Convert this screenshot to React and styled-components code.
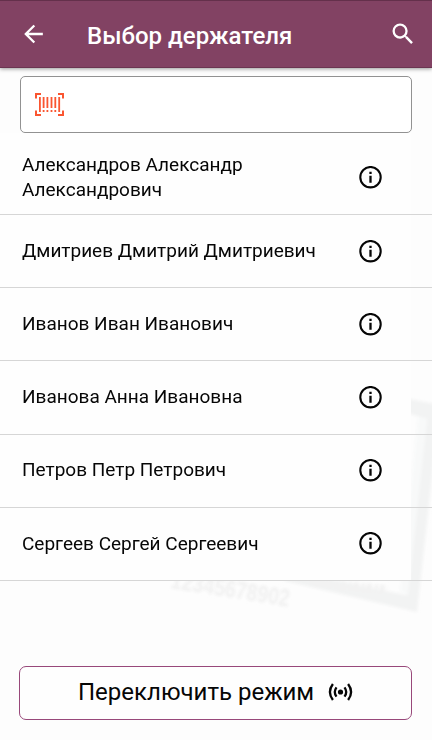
import React from "react";
import styled, { createGlobalStyle } from "styled-components";

const GlobalStyle = createGlobalStyle`
  * { box-sizing: border-box; }
  body { margin: 0; background: #fdfdfd; }
`;

const Screen = styled.div`
  position: relative;
  display: flex;
  flex-direction: column;
  width: 432px;
  height: 740px;
  overflow: hidden;
  background: #fdfdfd;
  color: #060606;
  font-family: Roboto, "Liberation Sans", sans-serif;
`;

const Watermark = styled.svg`
  position: absolute;
  left: 0;
  top: 0;
  pointer-events: none;
`;

const AppBar = styled.header`
  position: relative;
  display: flex;
  flex: none;
  align-items: center;
  height: 68px;
  padding: 0 15px 0 19px;
  color: #fff;
  background: #824263;
  border-top: 1px solid #64304b;
  border-bottom: 1px solid #6b3551;
  box-shadow: 0 1px 4px rgba(0, 0, 0, 0.4);
`;

const Title = styled.h1`
  flex: 1;
  margin: 3px 0 0 39px;
  font-size: 24px;
  line-height: 28px;
  font-weight: 500;
  white-space: nowrap;
`;

const IconButton = styled.button`
  display: flex;
  padding: 0;
  border: 0;
  background: none;
  color: inherit;
  svg { display: block; }
`;

const ScanField = styled.div`
  position: relative;
  display: flex;
  flex: none;
  align-items: center;
  height: 57px;
  margin: 8px 20px 0;
  padding-left: 14px;
  background: #fff;
  border: 1px solid #929292;
  border-radius: 5px;
`;

const List = styled.ul`
  position: relative;
  flex: none;
  display: grid;
  grid-template-rows: 82px repeat(5, 73.2px);
  margin: 0;
  padding: 0;
  list-style: none;
`;

const Row = styled.li`
  display: flex;
  align-items: center;
  justify-content: space-between;
  padding: 0 50px 0 22px;
  background: linear-gradient(to right, #fefefe 411px, transparent 411px);
  border-bottom: 1px solid #d6d6d6;

  &:first-child { padding-top: 8px; }
`;

const Name = styled.span`
  width: 310px;
  padding-bottom: 1.5px;
  font-size: 19px;
  line-height: 25px;
`;

const Footer = styled.footer`
  position: relative;
  margin: auto 20px 20px 19px;
`;

const ModeButton = styled.button`
  display: flex;
  align-items: center;
  width: 100%;
  height: 54px;
  padding: 0 0 3px 58px;
  gap: 14px;
  color: #060606;
  font-family: inherit;
  font-size: 24px;
  white-space: nowrap;
  background: #fefefe;
  border: 1px solid #98487a;
  border-radius: 7px;
`;

const BackIcon = () => (
  <svg width="29" height="28" viewBox="0 0 24 24" fill="currentColor">
    <path d="M20 11H7.83l5.59-5.59L12 4l-8 8 8 8 1.41-1.41L7.83 13H20v-2z" />
  </svg>
);

const SearchIcon = () => (
  <svg width="28" height="28" viewBox="0 0 24 24" fill="currentColor">
    <path d="M15.5 14h-.79l-.28-.27A6.47 6.47 0 0 0 16 9.5 6.5 6.5 0 1 0 9.5 16c1.61 0 3.09-.59 4.23-1.57l.27.28v.79l5 4.99L20.49 19l-4.99-5zm-6 0C7.01 14 5 11.99 5 9.5S7.01 5 9.5 5 14 7.01 14 9.5 11.99 14 9.5 14z" />
  </svg>
);

const BarcodeIcon = () => (
  <svg width="29" height="23" viewBox="0 0 29 23" fill="none" stroke="#fa5530">
    <path strokeWidth="2" d="M1 5.5V1h5M23 1h5v4.5M1 17.5V22h5M23 22h5v-4.5" />
    <path strokeWidth="1.8" d="M4.9 4v15M24.2 4v15" />
    <path strokeWidth="1.8" d="M8.6 4v11M12.4 4v11M16.5 4v11M20.3 4v11M8.6 17v2M12.4 17v2M16.5 17v2M20.3 17v2" />
  </svg>
);

const InfoIcon = () => (
  <svg width="23" height="23" viewBox="0 0 23 23" fill="none" stroke="#060606">
    <circle cx="11.5" cy="11.2" r="10.2" strokeWidth="2.1" />
    <path strokeWidth="2.3" d="M11.5 5.8v2.2M11.5 9.8v7" />
  </svg>
);

const SignalIcon = () => (
  <svg width="25" height="18" viewBox="0 0 25 18" fill="none" stroke="#060606" strokeWidth="2.3">
    <circle cx="12.5" cy="9" r="2.6" fill="#060606" stroke="none" />
    <path d="M4.9 1Q-1.1 9 4.9 17M20.1 1Q26.1 9 20.1 17M8.5 4.3Q5.1 9 8.5 13.7M16.5 4.3Q19.9 9 16.5 13.7" />
  </svg>
);

const people = [
  "Александров Александр Александрович",
  "Дмитриев Дмитрий Дмитриевич",
  "Иванов Иван Иванович",
  "Иванова Анна Ивановна",
  "Петров Петр Петрович",
  "Сергеев Сергей Сергеевич",
];

export default function App() {
  return (
    <Screen>
      <GlobalStyle />
      <Watermark width="432" height="740" viewBox="0 0 432 740" aria-hidden="true">
        <defs>
          <filter id="soft" x="-10%" y="-10%" width="120%" height="120%">
            <feGaussianBlur stdDeviation="1.5" />
          </filter>
        </defs>
        <g filter="url(#soft)">
          <path fill="#f2f3f3" d="M400 397L440 405L417 612L285 581L285 570L406 595L427 419L400 411Z" />
          <path fill="#f8f9f9" d="M418 416L427 419L408 596L400 591Z" />
          <path stroke="#f2f2f2" strokeWidth="9" strokeDasharray="3 2 5 3" d="M310 582L388 590" />
          <text
            x="170"
            y="588"
            transform="rotate(9 170 588)"
            fill="#f0f0f0"
            fontFamily="Liberation Sans, sans-serif"
            fontSize="23"
            fontWeight="700"
            textLength="120"
            lengthAdjust="spacingAndGlyphs"
          >
            12345678902
          </text>
        </g>
      </Watermark>
      <AppBar>
        <IconButton aria-label="Назад"><BackIcon /></IconButton>
        <Title>Выбор держателя</Title>
        <IconButton aria-label="Поиск"><SearchIcon /></IconButton>
      </AppBar>
      <ScanField><BarcodeIcon /></ScanField>
      <List>
        {people.map((name) => (
          <Row key={name}>
            <Name>{name}</Name>
            <IconButton aria-label="Информация"><InfoIcon /></IconButton>
          </Row>
        ))}
      </List>
      <Footer>
        <ModeButton>
          Переключить режим
          <SignalIcon />
        </ModeButton>
      </Footer>
    </Screen>
  );
}
